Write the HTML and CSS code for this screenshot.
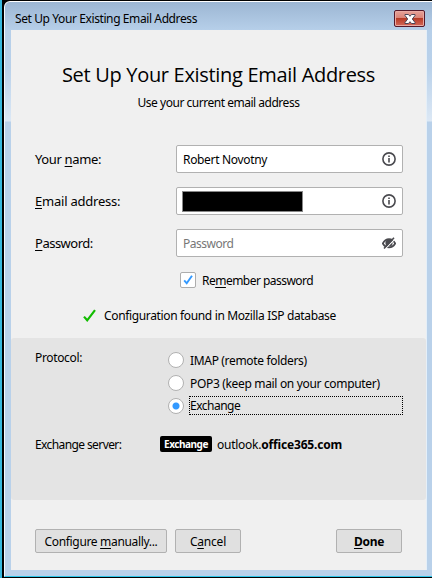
FILE: index.html
```
<!DOCTYPE html>
<html lang="en">
<head>
<meta charset="utf-8">
<title>Set Up Your Existing Email Address</title>
<link rel="stylesheet" href="styles.css">
</head>
<body>
<div class="window">
  <header class="titlebar">
    <span class="caption">Set Up Your Existing Email Address</span>
    <button class="close" aria-label="Close">
      <svg width="12" height="10" viewBox="0 0 12 10"><path d="M1 .5h3.500L6 2.300 7.500.5H11v1L8.300 5 11 8.500v1H7.500L6 7.700 4.500 9.500H1v-1L3.700 5 1 1.500z" fill="#fff" stroke="#4a4658" stroke-width="1"/></svg>
    </button>
  </header>
  <main class="content">
    <h1>Set Up Your Existing Email Address</h1>
    <p class="subtitle">Use your current email address</p>
    <form class="fields">
      <div class="field">
        <label class="name-label">Your <u>n</u>ame:</label>
        <div class="input"><span class="value">Robert Novotny</span>
          <svg width="14" height="14" viewBox="0 0 14 14"><circle cx="7" cy="7" r="6.1" fill="none" stroke="#4a4a4f" stroke-width="1.6"/><path d="M6.2 3.4h1.6v1.5H6.2zM6.2 6h1.6v4.5H6.2z" fill="#4a4a4f"/></svg>
        </div>
      </div>
      <div class="field">
        <label class="email-label"><u>E</u>mail address:</label>
        <div class="input"><span class="redacted"></span>
          <svg width="14" height="14" viewBox="0 0 14 14"><circle cx="7" cy="7" r="6.1" fill="none" stroke="#4a4a4f" stroke-width="1.6"/><path d="M6.2 3.4h1.6v1.5H6.2zM6.2 6h1.6v4.5H6.2z" fill="#4a4a4f"/></svg>
        </div>
      </div>
      <div class="field">
        <label class="password-label"><u>P</u>assword:</label>
        <div class="input"><span class="placeholder">Password</span>
          <svg width="14" height="14" viewBox="0 0 14 14"><path d="M.8 7.5C2.4 4.4 4.5 3.2 7 3.2s4.600 1.200 6.200 4.300C11.600 10.200 9.500 11.400 7 11.400S2.400 10.200.8 7.500z" fill="none" stroke="#4a4a4f" stroke-width="1.700"/><circle cx="7" cy="6.900" r="3.600" fill="#4a4a4f"/><path d="M3.200 12.900 13.200 2.900" stroke="#fff" stroke-width="1.200"/><path d="M2 12.500 12 1.700" stroke="#4a4a4f" stroke-width="1.600"/></svg>
        </div>
      </div>
    </form>
    <div class="remember">
      <span class="checkbox"><svg width="14" height="14" viewBox="0 0 14 14"><path d="M3.200 7.400 5.700 10.300 11 2.700" fill="none" stroke="#3399ff" stroke-width="1.900"/></svg></span>
      <span class="remember-text">Re<u>m</u>ember password</span>
    </div>
    <div class="status">
      <svg width="13" height="13" viewBox="0 0 13 13"><path d="M1 7.600 4.200 11.300 12 1.200" fill="none" stroke="#12bc00" stroke-width="2.200"/></svg>
      <span>Configuration found in Mozilla ISP database</span>
    </div>
    <section class="results">
      <div class="protocol">
        <span class="section-label">Protocol:</span>
        <div class="options">
          <div class="option"><span class="radio"></span><span class="option-text">IMAP (remote folders)</span></div>
          <div class="option"><span class="radio"></span><span class="option-text">POP3 (keep mail on your computer)</span></div>
          <div class="option"><span class="radio checked"></span><span class="option-text focused">Exchange</span></div>
        </div>
      </div>
      <div class="server">
        <span class="server-label">Exchange server:</span>
        <span class="badge">Exchange</span>
        <span class="host">outlook.<b>office365.com</b></span>
      </div>
    </section>
    <footer class="actions">
      <button class="button configure">Configure <u>m</u>anually...</button>
      <button class="button cancel">C<u>a</u>ncel</button>
      <button class="button done"><u>D</u>one</button>
    </footer>
  </main>
</div>
</body>
</html>
```
FILE: styles.css
```
* { box-sizing: border-box; }
body {
  margin: 0;
  height: 578px;
  overflow: hidden;
  padding: 1px 0 1px 4px;
  background: linear-gradient(90deg, #38b8dc 0 2px, #000 2px);
  font: 12px/18px "Noto Sans", "Open Sans", sans-serif;
  color: #000;
}
u { text-decoration-thickness: 1px; text-underline-offset: 2px; text-decoration-skip-ink: none; }
svg { display: block; flex: none; }
.window {
  height: 576px;
  border-top: 1px solid #fff;
  border-left: 1px solid #f5faff;
  border-bottom: 1px solid #2cc5e8;
  border-top-left-radius: 6px;
  padding: 0 5px 6px 6px;
  background: linear-gradient(#9cb6d3 0, #b6cfe9 28px, #b9d1ea 65px, #dce8f5 119px, #b9d1ea 120px);
}
.titlebar { height: 28px; display: flex; align-items: flex-start; justify-content: space-between; padding: 8px 2px 0 4px; }
.caption { letter-spacing: -.4px; white-space: nowrap; }
.close {
  width: 31px;
  height: 17px;
  padding: 0;
  display: flex;
  align-items: center;
  justify-content: center;
  border: 1px solid #54192a;
  border-radius: 2px;
  box-shadow: inset 0 0 0 1px #e9aaa3;
  background: linear-gradient(#e6a299 0, #d98276 48%, #b73b26 50%, #d4695a 100%);
}
.content { height: 540px; background: #f0f0f0; display: flex; flex-direction: column; border-right: 1px solid #e5eff8; }
h1 { margin: 30px 0 0; text-align: center; font-family: "Open Sans", "Noto Sans", sans-serif; font-size: 20px; line-height: 30px; font-weight: 400; letter-spacing: -.31px; white-space: nowrap; }
.subtitle { margin: 4px 0 0; text-align: center; letter-spacing: -.48px; }
.fields { margin: 33px 24px 0; display: flex; flex-direction: column; gap: 14px; }
.field { display: grid; grid-template-columns: 141px 227px; height: 28px; align-items: center; }
.field label { font-size: 13px; white-space: nowrap; }
.name-label { letter-spacing: -.35px; }
.email-label { letter-spacing: -.22px; }
.password-label { letter-spacing: -.5px; }
.input { height: 28px; display: flex; align-items: center; justify-content: space-between; padding: 0 6px; border: 1px solid #b1b1b1; border-radius: 2px; background: #fff; }
.value { letter-spacing: -.33px; padding-top: 1px; }
.placeholder { color: #777; letter-spacing: -.5px; padding-top: 1px; }
.redacted { width: 121px; height: 21px; margin-left: -1px; background: #000; border: 1px solid #888; }
.remember { display: flex; align-items: center; margin: 15px 0 0 169px; height: 16px; gap: 6px; }
.checkbox { width: 16px; height: 16px; border: 1px solid #adadad; border-radius: 2px; background: #fff; }
.remember-text { padding-top: 2px; letter-spacing: -.53px; }
.status { display: flex; align-items: center; margin: 18px 0 0 72px; height: 18px; gap: 8px; }
.status span { padding-top: 1px; letter-spacing: -.35px; }
.results { height: 162px; margin-top: 14px; padding: 14px 24px 0; border-radius: 3px; background: #e4e4e4; }
.protocol { display: grid; grid-template-columns: 133px 235px; }
.section-label { line-height: 12px; letter-spacing: -.35px; }
.options { display: grid; grid-auto-rows: 23px; }
.option { display: flex; align-items: flex-start; gap: 5px; }
.radio { width: 16px; height: 16px; flex: none; border: 1px solid #b1b1b1; border-radius: 50%; background: #fff; }
.checked { background: radial-gradient(circle, #3399ff 3px, #fff 4px); }
.option-text { flex: 1; letter-spacing: -.33px; padding-left: 1px; line-height: 17px; white-space: nowrap; }
.focused { border: 1px dotted #000; margin-top: -2px; padding-left: 0; height: 19px; letter-spacing: -.5px; }
.server { display: flex; align-items: center; height: 18px; margin-top: 14px; }
.server-label { width: 125px; padding-top: 2px; letter-spacing: -.6px; }
.badge { width: 52px; height: 16px; border-radius: 2px; background: #000; color: #fff; font-size: 10px; line-height: 16px; font-weight: 700; text-align: center; letter-spacing: -.45px; }
.host { margin-left: 5px; padding-top: 2px; letter-spacing: -.25px; white-space: nowrap; }
.host b { letter-spacing: -.17px; }
.actions { display: flex; margin: 29px 24px 0; }
.button { height: 24px; padding: 1px 0 0; border: 1px solid #b1b1b1; border-radius: 2px; background: #e0e0e0; font: inherit; color: #000; }
.configure { width: 132px; letter-spacing: -.33px; }
.cancel { width: 66px; margin-left: 8px; letter-spacing: -.2px; }
.done { width: 66px; margin-left: auto; font-weight: 700; letter-spacing: -.3px; }
```
